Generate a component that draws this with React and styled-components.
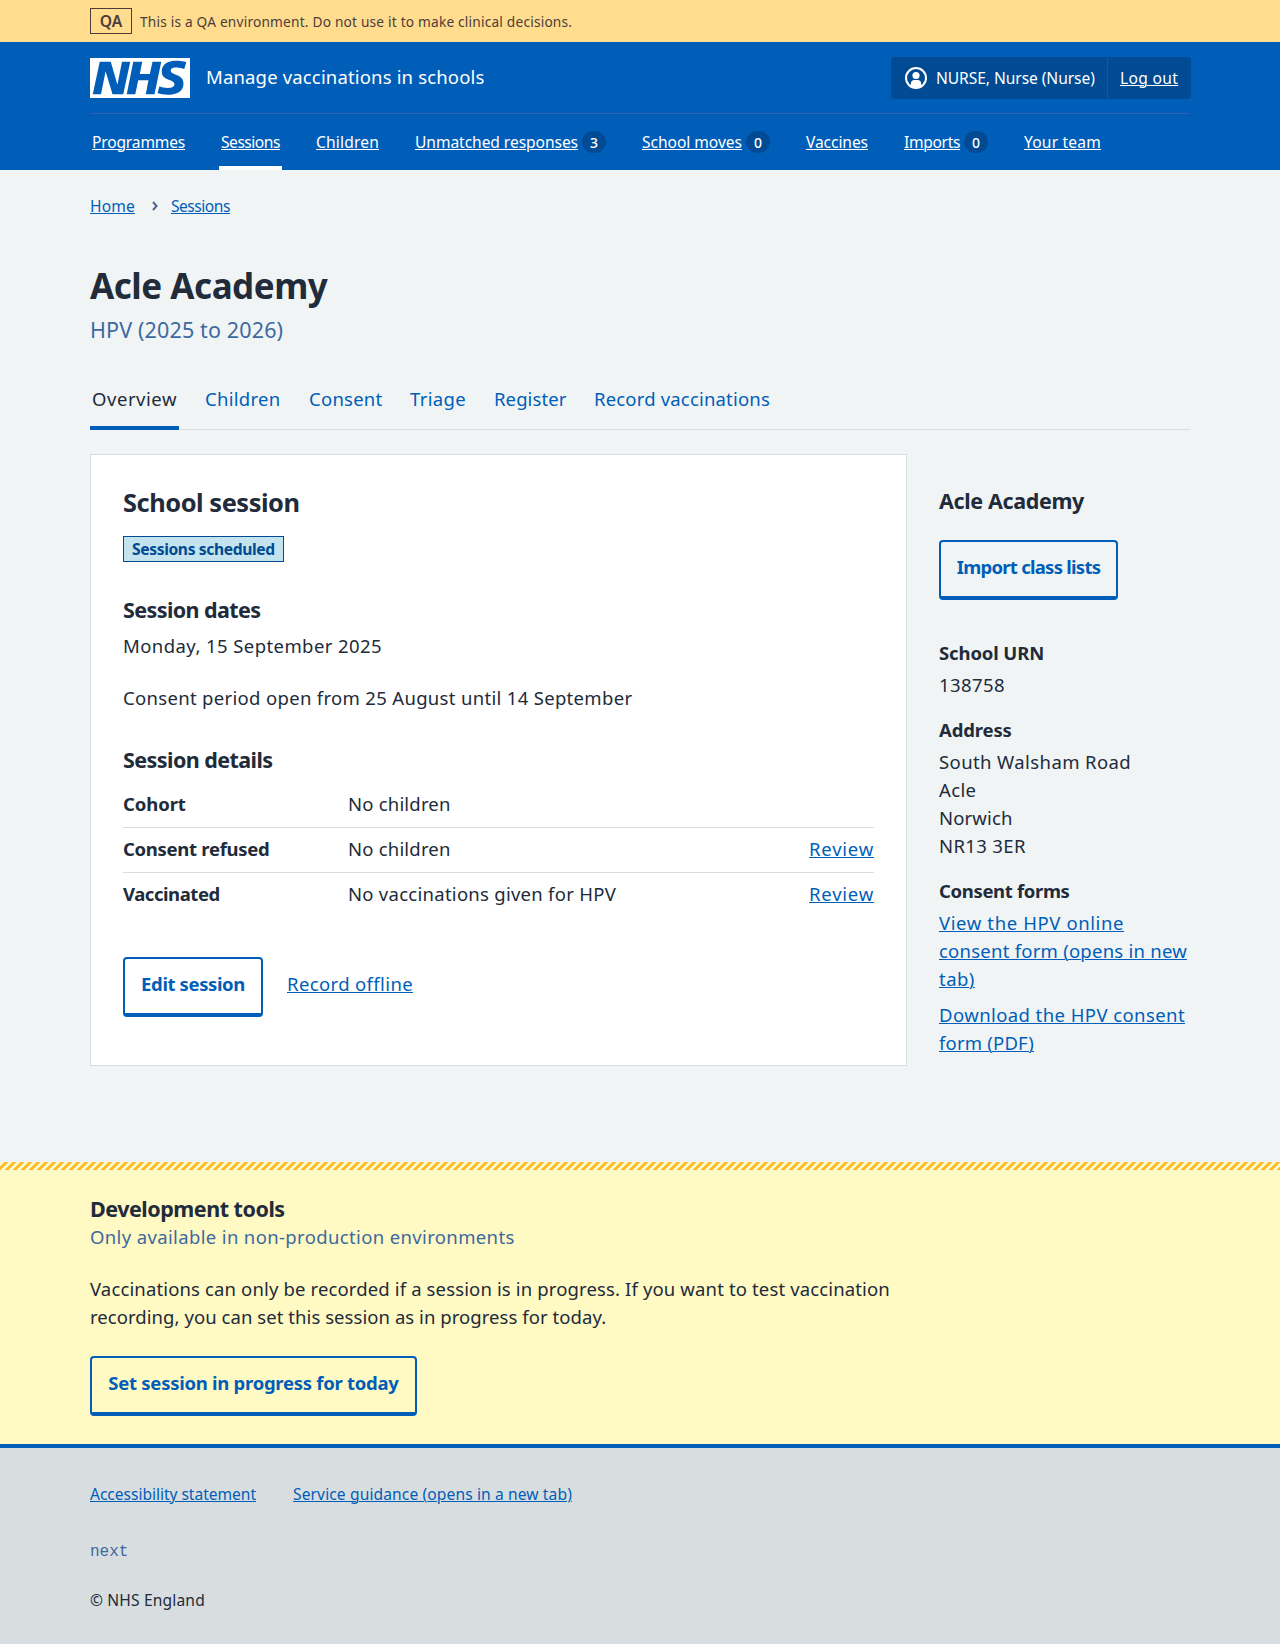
import React from "react";
import styled, { createGlobalStyle, css } from "styled-components";

const blue = "#005eb8";
const darkBlue = "#004b93";
const ink = "#212b3a";
const grey = "#d8dde0";
const secondary = "#3d6a9e";

const Global = createGlobalStyle`
  *, *::before, *::after { box-sizing: border-box; }
  body {
    margin: 0;
    background: #f0f4f5;
    color: ${ink};
    font-family: "Noto Sans", "Open Sans", sans-serif;
    font-size: 18.5px;
    font-weight: 400;
    line-height: 28px;
  }
  h1, h2, h3, p, ul, ol, dl, dt, dd { margin: 0; padding: 0; }
  ul, ol { list-style: none; }
`;

const tracking = css`
  letter-spacing: ${(p) => p.$ls || 0}px;
`;

const Container = styled.div`
  width: 1100px;
  margin: 0 auto;
`;

const Link = styled.a`
  color: ${blue};
  text-decoration: underline;
  text-decoration-thickness: 1px;
  text-underline-offset: 1px;
  ${tracking}
`;

/* Environment banner */
const Banner = styled.div`
  height: 42px;
  background: #ffdc8e;
  color: #4d3d3a;
`;
const BannerInner = styled(Container)`
  display: flex;
  align-items: center;
  gap: 8px;
  height: 42px;
`;
const EnvTag = styled.strong`
  width: 42px;
  height: 26px;
  border: 1px solid #4d3d3a;
  font-size: 15.6px;
  font-weight: 600;
  line-height: 24px;
  text-align: center;
`;
const BannerText = styled.span`
  font-size: 13.7px;
  line-height: 25px;
  padding-top: 1px;
  ${tracking}
`;

/* Header */
const Header = styled.header`
  background: ${blue};
  color: #fff;
`;
const HeaderTop = styled.div`
  display: flex;
  align-items: center;
  height: 72px;
  padding-top: 1px;
  border-bottom: 1px solid #335fad;
`;
const Logo = styled.svg`
  display: block;
  width: 100px;
  height: 40px;
`;
const ServiceName = styled.span`
  margin: -3px auto 0 16px;
  ${tracking}
`;
const Account = styled.div`
  display: flex;
  height: 42px;
  margin-right: -1px;
  padding: 1px 0;
  border-radius: 4px;
  background: ${darkBlue};
  font-size: 15.6px;
  line-height: 40px;
`;
const AccountUser = styled.div`
  display: flex;
  align-items: center;
  gap: 9px;
  width: 217px;
  padding-left: 14px;
  border-right: 1px solid ${blue};
  white-space: nowrap;
  ${tracking}
`;
const AccountLink = styled.div`
  width: 83px;
  padding-left: 12px;
`;
const LightLink = styled(Link)`
  color: #fff;
`;
const Nav = styled.ul`
  display: flex;
  gap: 32px;
  height: 56px;
  font-size: 15.6px;
  line-height: 56px;
`;
const NavItem = styled.li`
  display: flex;
  align-items: center;
  gap: 4px;
  width: ${(p) => p.$w}px;
  padding: 0 2px;
  white-space: nowrap;
  box-shadow: ${(p) => (p.$current ? "inset 0 -4px 0 #fff" : "none")};
`;
const NavLabel = styled.span`
  flex: 1;
`;
const Count = styled.span`
  width: 24px;
  height: 22px;
  border-radius: 12px;
  background: ${darkBlue};
  font-size: 14px;
  font-weight: 500;
  line-height: 23px;
  text-align: center;
`;

/* Page heading */
const Breadcrumb = styled.ol`
  display: flex;
  align-items: center;
  padding-top: 24px;
  font-size: 15.6px;
  line-height: 24px;
`;
const Chevron = styled.svg`
  width: 8px;
  height: 12px;
  margin: 0 12px 0 16px;
`;
const PageTitle = styled.h1`
  margin-top: 46px;
  font-size: 35px;
  font-weight: 700;
  line-height: 44px;
  ${tracking}
`;
const Caption = styled.p`
  margin-top: ${(p) => p.$top}px;
  font-size: ${(p) => p.$size}px;
  line-height: ${(p) => p.$lh}px;
  color: ${secondary};
  ${tracking}
`;
const Tabs = styled.ul`
  display: flex;
  gap: 24px;
  padding-top: 40px;
  box-shadow: inset 0 -1px 0 ${grey};
`;
const Tab = styled.li`
  width: ${(p) => p.$w}px;
  padding: 0 2px 17px;
  white-space: nowrap;
  color: ${(p) => (p.$current ? ink : blue)};
  box-shadow: ${(p) => (p.$current ? `inset 0 -4px 0 ${blue}` : "none")};
  ${tracking}
`;

/* Content */
const Columns = styled.main`
  display: grid;
  grid-template-columns: 817px 251px;
  gap: 32px;
  margin-top: 24px;
`;
const Card = styled.section`
  height: 612px;
  padding: 29px 32px 0;
  border: 1px solid ${grey};
  background: #fff;
`;
const CardTitle = styled.h2`
  font-size: 25.4px;
  font-weight: 700;
  line-height: 36px;
  ${tracking}
`;
const StatusTag = styled.strong`
  display: block;
  width: 161px;
  height: 26px;
  margin-top: 16px;
  padding-left: 8px;
  border: 1px solid ${darkBlue};
  background: #c3e3ee;
  color: ${darkBlue};
  font-size: 15.6px;
  font-weight: 700;
  line-height: 24px;
  white-space: nowrap;
  ${tracking}
`;
const SubHeading = styled.h3`
  margin-top: ${(p) => p.$top}px;
  font-size: 21.5px;
  font-weight: 700;
  line-height: 31px;
  ${tracking}
`;
const Text = styled.p`
  margin-top: ${(p) => p.$top}px;
  ${tracking}
`;
const Line = styled.span`
  display: block;
  white-space: nowrap;
  ${tracking}
`;
const Summary = styled.dl`
  margin-top: 8px;
`;
const SummaryRow = styled.div`
  display: grid;
  grid-template-columns: 225px 1fr auto;
  height: 45px;
  padding-top: 7px;
  border-bottom: 1px solid ${grey};
  &:last-child { border-bottom-color: transparent; }
`;
const Term = styled.dt`
  font-weight: 700;
  ${tracking}
`;
const Value = styled.dd`
  ${tracking}
`;
const Actions = styled.div`
  display: flex;
  gap: 24px;
  margin-top: 39px;
`;
const ActionLink = styled.div`
  padding-top: 13px;
`;
const Button = styled.button`
  display: flex;
  justify-content: center;
  width: ${(p) => p.$w}px;
  height: 60px;
  margin: ${(p) => p.$top || 0}px 0 0;
  padding: 11px 0 0;
  border: 2px solid ${blue};
  border-bottom-width: 4px;
  border-radius: 4px;
  background: transparent;
  color: ${blue};
  font: 700 18.5px/28px "Noto Sans", "Open Sans", sans-serif;
  white-space: nowrap;
  ${tracking}
`;
const Sidebar = styled.aside`
  padding-top: 1px;
`;
const Details = styled.dl`
  margin-top: 39px;
  dt { margin-top: 17px; }
  dt:first-child { margin-top: 0; }
  dd { margin-top: 4px; }
  dd + dd { margin-top: 8px; }
`;

/* Development tools */
const DevTools = styled.section`
  margin-top: 96px;
  height: 282px;
  background: #fff9c4;
`;
const Stripes = styled.div`
  height: 8px;
  background: linear-gradient(
      -45deg,
      #ffb92e 25%,
      transparent 25%,
      transparent 50%,
      #ffb92e 50%,
      #ffb92e 75%,
      transparent 75%
    )
    0 0 / 8px 8px;
`;

/* Footer */
const Footer = styled.footer`
  height: 200px;
  padding-top: 34px;
  border-top: 4px solid ${blue};
  background: ${grey};
  font-size: 15.6px;
  line-height: 24px;
`;
const FooterLinks = styled.div`
  display: flex;
  gap: 37px;
`;
const Version = styled.p`
  margin-top: 34px;
  color: ${secondary};
  font-family: "Liberation Mono", monospace;
  font-size: 16px;
`;

const navItems = [
  { label: "Programmes", w: 97, ls: -0.18 },
  { label: "Sessions", w: 63, ls: -0.49, current: true },
  { label: "Children", w: 67, ls: 0.16 },
  { label: "Unmatched responses", w: 195, ls: -0.07, count: 3 },
  { label: "School moves", w: 132, ls: -0.05, count: 0 },
  { label: "Vaccines", w: 66, ls: -0.09 },
  { label: "Imports", w: 88, ls: -0.33, count: 0 },
  { label: "Your team", w: 81, ls: 0.17 },
];

const tabs = [
  { label: "Overview", w: 89, ls: 0.54, current: true },
  { label: "Children", w: 80, ls: 0.28 },
  { label: "Consent", w: 77, ls: 0.25 },
  { label: "Triage", w: 60, ls: 0.34 },
  { label: "Register", w: 76, ls: 0.1 },
  { label: "Record vaccinations", w: 180, ls: 0.18 },
];

const rows = [
  { term: "Cohort", tls: -0.1, value: "No children", vls: 0.2 },
  { term: "Consent refused", tls: -0.29, value: "No children", vls: 0.2, review: true },
  { term: "Vaccinated", tls: -0.45, value: "No vaccinations given for HPV", vls: 0.27, review: true },
];

function NhsLogo() {
  return (
    <Logo viewBox="0 0 200 80" role="img" aria-label="NHS">
      <path
        fill="#fff"
        d="M200 0v80H0V0h200Zm-27.5 5.5c-14.5 0-29 5-29 22 0 10.2 7.7 13.5 14.7 16.3l.7.3c5.4 2 10.1 3.9 10.1 8.4 0 6.5-8.5 7.5-14 7.5s-12.5-1.5-16-3.5L135 70c5.5 2 13.5 3.5 20 3.5 15.5 0 32-4.5 32-22.5 0-19.5-25.5-16.5-25.5-25.5 0-5.5 5.5-6.5 12.5-6.5a35 35 0 0 1 14.5 3l4-13.5c-4.5-2-12-3-20-3Zm-131 2h-22l-14 65H22l9-45h.5l13.5 45h21.5l14-65H64l-9 45h-.5l-13-45Zm63 0h-18l-13 65h17l6-28H117l-5.5 28H129l13.5-65H125L119.5 32h-20l5-24.5Z"
      />
    </Logo>
  );
}

function UserIcon() {
  return (
    <svg width="22" height="22" viewBox="0 0 22 22" aria-hidden="true">
      <circle cx="11" cy="11" r="10" fill="none" stroke="#fff" strokeWidth="2" />
      <circle cx="11" cy="8.500" r="3.600" fill="#fff" />
      <path fill="#fff" d="M5.800 19v-2.200c0-2.300 1.500-3.800 3.500-3.800h3.400c2 0 3.500 1.500 3.500 3.800V19c-1.300 1-3.200 1.700-5.200 1.700s-3.900-.7-5.200-1.700Z" />
    </svg>
  );
}

export default function App() {
  return (
    <>
      <Global />
      <Banner>
        <BannerInner>
          <EnvTag>QA</EnvTag>
          <BannerText $ls={0.2}>
            This is a QA environment. Do not use it to make clinical decisions.
          </BannerText>
        </BannerInner>
      </Banner>

      <Header>
        <Container>
          <HeaderTop>
            <NhsLogo />
            <ServiceName $ls={0.16}>Manage vaccinations in schools</ServiceName>
            <Account>
              <AccountUser $ls={-0.07}>
                <UserIcon />
                NURSE, Nurse (Nurse)
              </AccountUser>
              <AccountLink>
                <LightLink $ls={0.32}>Log out</LightLink>
              </AccountLink>
            </Account>
          </HeaderTop>
          <Nav>
            {navItems.map((n) => (
              <NavItem key={n.label} $w={n.w} $current={n.current}>
                <NavLabel>
                  <LightLink $ls={n.ls}>{n.label}</LightLink>
                </NavLabel>
                {n.count !== undefined && <Count>{n.count}</Count>}
              </NavItem>
            ))}
          </Nav>
        </Container>
      </Header>

      <Container>
        <Breadcrumb>
          <li><Link $ls={0.15}>Home</Link></li>
          <Chevron viewBox="0 0 8 12" aria-hidden="true">
            <path d="M2 2l3.600 4L2 10" fill="none" stroke="#48618a" strokeWidth="1.900" />
          </Chevron>
          <li><Link $ls={-0.49}>Sessions</Link></li>
        </Breadcrumb>
        <PageTitle $ls={-0.48}>Acle Academy</PageTitle>
        <Caption $top={6} $size={21.5} $lh={31} $ls={0.14}>HPV (2025 to 2026)</Caption>
        <Tabs>
          {tabs.map((t) => (
            <Tab key={t.label} $w={t.w} $ls={t.ls} $current={t.current}>{t.label}</Tab>
          ))}
        </Tabs>

        <Columns>
          <Card>
            <CardTitle $ls={-0.45}>School session</CardTitle>
            <StatusTag $ls={-0.35}>Sessions scheduled</StatusTag>
            <SubHeading $top={32} $ls={-0.59}>Session dates</SubHeading>
            <Text $top={7} $ls={0.42}>Monday, 15 September 2025</Text>
            <Text $top={24} $ls={0.32}>Consent period open from 25 August until 14 September</Text>
            <SubHeading $top={32} $ls={-0.56}>Session details</SubHeading>
            <Summary>
              {rows.map((r) => (
                <SummaryRow key={r.term}>
                  <Term $ls={r.tls}>{r.term}</Term>
                  <Value $ls={r.vls}>{r.value}</Value>
                  {r.review && <dd><Link $ls={0.77}>Review</Link></dd>}
                </SummaryRow>
              ))}
            </Summary>
            <Actions>
              <Button $w={140} $ls={-0.39}>Edit session</Button>
              <ActionLink><Link $ls={0.37}>Record offline</Link></ActionLink>
            </Actions>
          </Card>

          <Sidebar>
            <SubHeading $top={30} $ls={-0.36}>Acle Academy</SubHeading>
            <Button $w={179} $top={24} $ls={-0.74}>Import class lists</Button>
            <Details>
              <Term $ls={-0.12}>School URN</Term>
              <Value $ls={0.42}>138758</Value>
              <Term $ls={-0.15}>Address</Term>
              <dd>
                <Line $ls={0.4}>South Walsham Road</Line>
                <Line $ls={0.35}>Acle</Line>
                <Line $ls={0.15}>Norwich</Line>
                <Line $ls={0.36}>NR13 3ER</Line>
              </dd>
              <Term $ls={-0.34}>Consent forms</Term>
              <dd>
                <Line><Link $ls={0.61}>View the HPV online</Link></Line>
                <Line><Link $ls={0.24}>consent form (opens in new</Link></Line>
                <Line><Link $ls={0.45}>tab)</Link></Line>
              </dd>
              <dd>
                <Line><Link $ls={0.42}>Download the HPV consent</Link></Line>
                <Line><Link $ls={0.19}>form (PDF)</Link></Line>
              </dd>
            </Details>
          </Sidebar>
        </Columns>
      </Container>

      <DevTools>
        <Stripes />
        <Container>
          <SubHeading $top={23} $ls={-0.48}>Development tools</SubHeading>
          <Caption $top={-1} $size={18.5} $lh={28} $ls={0.36}>
            Only available in non-production environments
          </Caption>
          <Text $top={24}>
            <Line $ls={0.14}>
              Vaccinations can only be recorded if a session is in progress. If you want to test vaccination
            </Line>
            <Line $ls={0.06}>
              recording, you can set this session as in progress for today.
            </Line>
          </Text>
          <Button $w={327} $top={25} $ls={-0.27}>Set session in progress for today</Button>
        </Container>
      </DevTools>

      <Footer>
        <Container>
          <FooterLinks>
            <Link $ls={-0.04}>Accessibility statement</Link>
            <Link $ls={0.11}>Service guidance (opens in a new tab)</Link>
          </FooterLinks>
          <Version>next</Version>
          <Text $top={24} $ls={0.15}>© NHS England</Text>
        </Container>
      </Footer>
    </>
  );
}
